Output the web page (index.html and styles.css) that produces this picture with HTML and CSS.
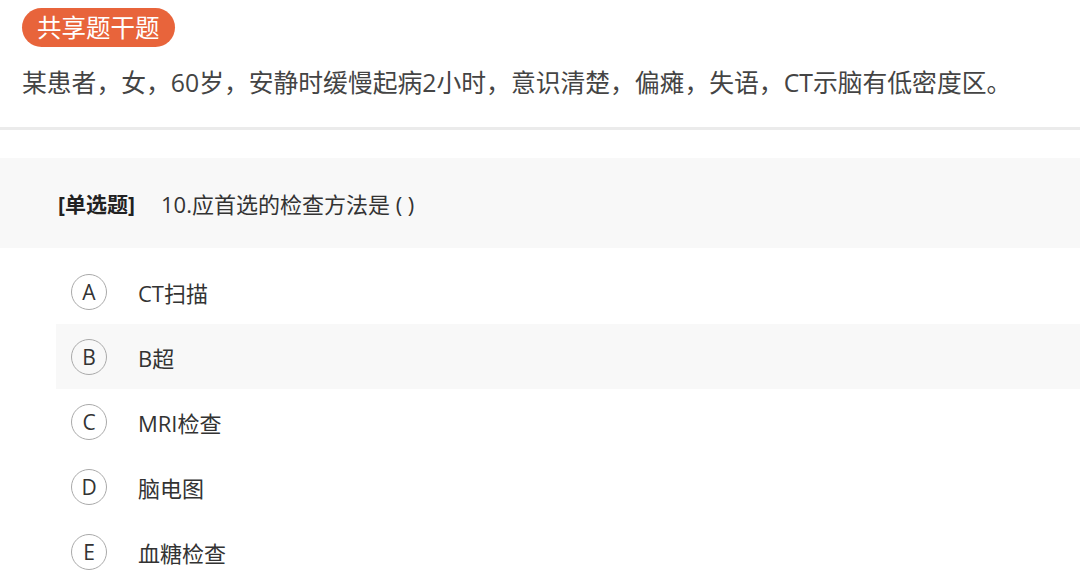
FILE: index.html
```html
<!DOCTYPE html>
<html lang="zh-CN">
<head>
    <meta charset="UTF-8">
    <meta name="viewport" content="width=device-width, initial-scale=1.0">
    <title>共享题干题</title>
    <link rel="stylesheet" href="styles.css">
</head>
<body>

    <!-- 题干 -->
    <div class="stem">
        <span class="badge">共享题干题</span>
        <p class="stem-text">某患者，女，60岁，安静时缓慢起病2小时，意识清楚，偏瘫，失语，CT示脑有低密度区。</p>
    </div>

    <div class="divider"></div>

    <!-- 问题 -->
    <div class="question">
        <span class="q-type">[单选题]</span>
        <span class="q-title">10.应首选的检查方法是 ( )</span>
    </div>

    <ul class="options">
        <li class="option"><span class="letter">A</span><span class="label">CT扫描</span></li>
        <li class="option active"><span class="letter">B</span><span class="label">B超</span></li>
        <li class="option"><span class="letter">C</span><span class="label">MRI检查</span></li>
        <li class="option"><span class="letter">D</span><span class="label">脑电图</span></li>
        <li class="option"><span class="letter">E</span><span class="label">血糖检查</span></li>
    </ul>

</body>
</html>
```

FILE: styles.css
```css
* {
    margin: 0;
    padding: 0;
    box-sizing: border-box;
}

body {
    font-family: "Open Sans", "Noto Sans CJK SC", sans-serif;
    background: #fff;
    color: #333;
    width: 1080px;
    overflow: hidden;
}

/* 题干 */
.stem {
    padding: 8px 22px 0;
    height: 127px;
}

.badge {
    display: inline-block;
    background: #e8643b;
    color: #fff;
    font-size: 24.5px;
    line-height: 39px;
    height: 39px;
    padding: 0 15px;
    border-radius: 20px;
}

.stem-text {
    margin-top: 17px;
    font-size: 24.8px;
    line-height: 36px;
    color: #444;
    white-space: nowrap;
}

.divider {
    height: 3px;
    background: #ebebeb;
}

/* 问题 */
.question {
    margin-top: 28px;
    height: 90px;
    background: #f8f8f8;
    display: flex;
    align-items: center;
    padding-left: 58px;
    font-size: 22px;
}

.q-type {
    font-weight: bold;
    color: #222;
    font-size: 21px;
    width: 103px;
}

.q-title {
    color: #333;
}

/* 选项 */
.options {
    list-style: none;
    padding: 11px 0 0 56px;
}

.option {
    display: flex;
    align-items: center;
    height: 65px;
    padding-left: 15px;
    font-size: 22px;
}

.option.active {
    background: #f8f8f8;
}

.letter {
    width: 36px;
    height: 36px;
    border: 1px solid #aaa;
    border-radius: 50%;
    display: flex;
    align-items: center;
    justify-content: center;
    color: #333;
    font-size: 21px;
    margin-right: 31px;
}

.label {
    color: #333;
}
```
